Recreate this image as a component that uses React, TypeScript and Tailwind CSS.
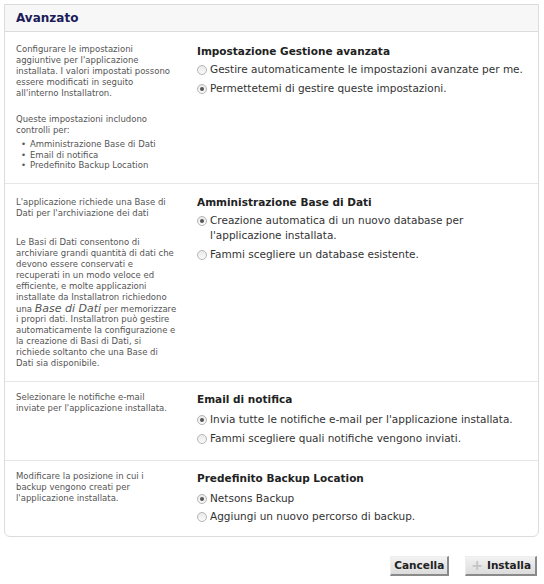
import React from "react";

const F = { fontFamily: '"DejaVu Sans", Verdana, sans-serif' };

function Radio({ checked }: { checked?: boolean }) {
  return (
    <span className="relative inline-block w-[10px] h-[10px] rounded-full border border-[#b5b5b5] bg-gradient-to-b from-[#e9e9e9] to-[#fafafa] shrink-0 mt-[3px]">
      {checked && (
        <span className="absolute left-[2px] top-[2px] w-[4px] h-[4px] rounded-full bg-[#555]" />
      )}
    </span>
  );
}

function Opt({ checked, lines }: { checked?: boolean; lines: string[] }) {
  return (
    <div className="flex gap-[3px] items-start">
      <Radio checked={checked} />
      <div className="text-[10.5px] leading-[15px] text-[#333]">
        {lines.map((l, i) => (
          <div key={i} className="whitespace-nowrap">{l}</div>
        ))}
      </div>
    </div>
  );
}

function Lines({ lines }: { lines: React.ReactNode[] }) {
  return (
    <div>
      {lines.map((l, i) => (
        <div key={i} className="whitespace-nowrap h-[11px]">{l}</div>
      ))}
    </div>
  );
}

function Section({
  left,
  title,
  children,
  last,
  className,
}: {
  left: React.ReactNode;
  title: string;
  children: React.ReactNode;
  last?: boolean;
  className?: string;
}) {
  return (
    <div className={`flex ${last ? "" : "border-b border-[#e6e6e6]"} ${className ?? ""}`}>
      <div className="w-[192px] pl-[11px] text-[8.5px] leading-[11px] text-[#555]">{left}</div>
      <div className="flex-1">
        <div className="text-[10.5px] font-bold text-[#222] leading-[14px]">{title}</div>
        {children}
      </div>
    </div>
  );
}

export default function App() {
  return (
    <div className="w-[544px] h-[584px] bg-white pt-[4px]" style={F}>
      <div className="ml-[4px] w-[535px] border border-[#dcdcdc] rounded-b-[6px]">
        <div className="h-[27px] bg-[#f7f7f7] border-b border-[#dcdcdc] pl-[11px] flex items-center">
          <span className="text-[12px] font-bold text-[#1c1c5a]">Avanzato</span>
        </div>

        <Section
          className="pt-[12px] pb-[12px]"
          title="Impostazione Gestione avanzata"
          left={
            <div>
              <Lines
                lines={[
                  "Configurare le impostazioni",
                  "aggiuntive per l'applicazione",
                  "installata. I valori impostati possono",
                  "essere modificati in seguito",
                  "all'interno Installatron.",
                ]}
              />
              <div className="mt-[15px]">
                <Lines lines={["Queste impostazioni includono", "controlli per:"]} />
                <div className="mt-[3px] leading-[10.5px]">
                  {["Amministrazione Base di Dati", "Email di notifica", "Predefinito Backup Location"].map((t) => (
                    <div key={t} className="flex whitespace-nowrap h-[10.5px]">
                      <span className="w-[14px] pl-[5px]">•</span>
                      <span>{t}</span>
                    </div>
                  ))}
                </div>
              </div>
            </div>
          }
        >
          <div className="mt-[4px] flex flex-col gap-[4px]">
            <Opt lines={["Gestire automaticamente le impostazioni avanzate per me."]} />
            <Opt checked lines={["Permettetemi di gestire queste impostazioni."]} />
          </div>
        </Section>

        <Section
          className="pt-[11px] pb-[12px]"
          title="Amministrazione Base di Dati"
          left={
            <div className="pt-[2px]">
              <Lines lines={["L'applicazione richiede una Base di", "Dati per l'archiviazione dei dati"]} />
              <div className="mt-[18px]">
                <Lines
                  lines={[
                    "Le Basi di Dati consentono di",
                    "archiviare grandi quantità di dati che",
                    "devono essere conservati e",
                    "recuperati in un modo veloce ed",
                    "efficiente, e molte applicazioni",
                    "installate da Installatron richiedono",
                    <span>
                      una <i className="text-[11px]">Base di Dati</i> per memorizzare
                    </span>,
                    "i propri dati. Installatron può gestire",
                    "automaticamente la configurazione e",
                    "la creazione di Basi di Dati, si",
                    "richiede soltanto che una Base di",
                    "Dati sia disponibile.",
                  ]}
                />
              </div>
            </div>
          }
        >
          <div className="mt-[4px] flex flex-col gap-[4px]">
            <Opt checked lines={["Creazione automatica di un nuovo database per", "l'applicazione installata."]} />
            <Opt lines={["Fammi scegliere un database esistente."]} />
          </div>
        </Section>

        <Section
          className="pt-[10px] pb-[14px]"
          title="Email di notifica"
          left={<Lines lines={["Selezionare le notifiche e-mail", "inviate per l'applicazione installata."]} />}
        >
          <div className="mt-[6px] flex flex-col gap-[4px]">
            <Opt checked lines={["Invia tutte le notifiche e-mail per l'applicazione installata."]} />
            <Opt lines={["Fammi scegliere quali notifiche vengono inviati."]} />
          </div>
        </Section>

        <Section
          last
          className="pt-[10px] pb-[12px]"
          title="Predefinito Backup Location"
          left={
            <Lines
              lines={["Modificare la posizione in cui i", "backup vengono creati per", "l'applicazione installata."]}
            />
          }
        >
          <div className="mt-[6px] flex flex-col gap-[3px]">
            <Opt checked lines={["Netsons Backup"]} />
            <Opt lines={["Aggiungi un nuovo percorso di backup."]} />
          </div>
        </Section>
      </div>

      <div className="mt-[19px] pr-[7px] flex justify-end gap-[16px]">
        <button className="h-[20px] px-[3px] bg-gradient-to-b from-[#f2f2f2] to-[#dcdcdc] border border-t-[#eeeeee] border-l-[#eeeeee] border-r-[#8a8a8a] border-b-[#8a8a8a] border-r-2 border-b-2 text-[10.5px] font-bold text-[#222] leading-none">
          Cancella
        </button>
        <button className="h-[20px] pl-[5px] pr-[4px] flex items-center gap-[4px] bg-gradient-to-b from-[#f2f2f2] to-[#dcdcdc] border border-t-[#eeeeee] border-l-[#eeeeee] border-r-[#8a8a8a] border-b-[#8a8a8a] border-r-2 border-b-2 text-[10.5px] font-bold text-[#222] leading-none">
          <span className="text-[14px] font-bold text-[#c4c4c4] leading-none">+</span>
          Installa
        </button>
      </div>
    </div>
  );
}
